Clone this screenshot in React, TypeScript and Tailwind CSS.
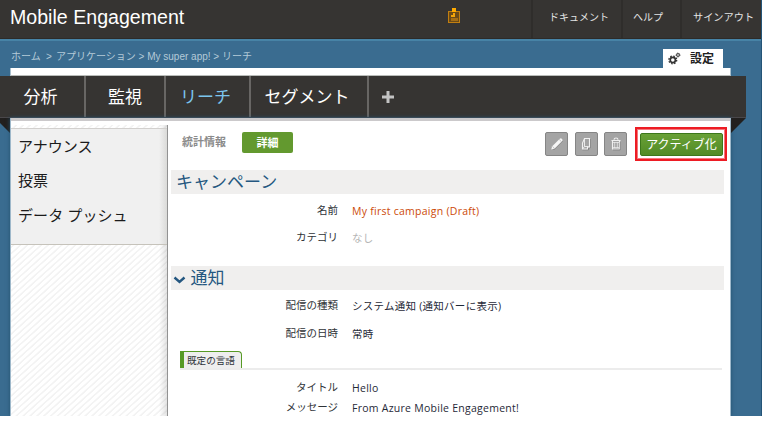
import React from "react";

const hatch =
  "bg-[repeating-linear-gradient(138deg,#ffffff_0px,#ffffff_2.4px,#f3f3f3_3.2px,#f3f3f3_4.2px,#ffffff_4.6px)]";

function IdBadge() {
  return (
    <svg width="14" height="16" viewBox="0 0 14 16" shapeRendering="crispEdges">
      <rect x="1" y="3" width="12" height="12" fill="#c27f10" />
      <rect x="2" y="4" width="10" height="10" fill="#6b4a17" />
      <rect x="5" y="0" width="4" height="4" fill="#ffab00" />
      <rect x="6" y="5" width="2" height="2" fill="#f3a50b" />
      <rect x="4" y="7" width="4" height="2" fill="#f3a50b" />
      <rect x="4" y="10" width="7" height="3" fill="#a56e15" />
    </svg>
  );
}

function Gears() {
  return (
    <svg width="13" height="13" viewBox="0 0 13 13" fill="none" stroke="#333">
      <circle cx="4.8" cy="8" r="2.6" strokeWidth="1.7" />
      <circle cx="4.8" cy="8" r="3.9" strokeWidth="1.3" strokeDasharray="1.6 1.463" />
      <circle cx="10" cy="3" r="1.4" strokeWidth="1" />
      <circle cx="10" cy="3" r="2.100" strokeWidth=".7" strokeDasharray=".8 .85" />
    </svg>
  );
}

function Pencil() {
  return (
    <svg width="14" height="14" viewBox="0 0 14 14">
      <path d="m3.500 13 9-9" stroke="#808080" strokeWidth="1" />
      <path d="M1.200 12.600 2.200 9.200 9.800 1.700q1-.9 2.200.2t.2 2.200L4.700 11.600Z" fill="#f6f6f6" />
      <path d="m2.500 9.400 2 2M9.200 2.500l2.200 2.200" stroke="#a2a2a2" strokeWidth=".6" />
    </svg>
  );
}

function Copy() {
  return (
    <svg width="12" height="14" viewBox="0 0 12 14" fill="none">
      <path d="M10.300 2v8.800H8.500v2h-6" stroke="#777" strokeWidth=".8" />
      <path d="M4.500 1.500h5v8.500H7.500v2h-5V6Z" stroke="#f1f1f1" strokeWidth="1.100" />
      <path d="M4.500 1.500V9.500h4M4.500 9.500l-2 2.500" stroke="#f1f1f1" strokeWidth=".9" />
    </svg>
  );
}

function Trash() {
  return (
    <svg width="12" height="14" viewBox="0 0 12 14" fill="none" stroke="#efefef">
      <path d="M4 2.800q0-1.800 2-1.800t2 1.800M1.500 3.500h9M2.500 4v8h7V4" strokeWidth="1.100" />
      <path d="M4.700 5v6M7.300 5v6M3 5.500h6M3 10.500h6" strokeWidth=".7" />
      <path d="M3 13h7.200V5" stroke="#777" strokeWidth=".6" />
    </svg>
  );
}

function ToolButton({ children }: { children: React.ReactNode }) {
  return (
    <button className="flex h-6 w-[23px] items-center justify-center rounded-[2px] border border-[#858585] bg-[#a4a4a4]">
      {children}
    </button>
  );
}

function Row({
  label,
  value,
  className,
  valueClass = "text-[#1f2937]",
}: {
  label: string;
  value: string;
  className: string;
  valueClass?: string;
}) {
  return (
    <div className={"flex text-[10.5px] whitespace-nowrap " + className}>
      <div className="w-[170px] text-right text-[#2f3337]">{label}</div>
      <div className={"ml-[14px] pt-px tracking-[0.26px] " + valueClass}>{value}</div>
    </div>
  );
}

function NavItem({ label, className }: { label: string; className: string }) {
  return (
    <div className={"flex h-full items-center border-r-2 border-[#686664] whitespace-nowrap " + className}>
      {label}
    </div>
  );
}

export default function App() {
  return (
    <div className="h-[436px] w-[765px] overflow-hidden bg-white font-['Open_Sans','Noto_Sans_CJK_JP',sans-serif]">
      <div className="flex h-[416px] w-[762px] flex-col overflow-hidden border-r border-[#245477] bg-[#3a6c90]">
        <header className="flex h-[39px] w-[762px] shrink-0 border-b border-[#2d2b29] bg-[#363432] font-['Liberation_Sans','Noto_Sans_CJK_JP',sans-serif]">
          <div className="w-[447px] pl-[10px] text-[19.6px] leading-[35px] text-white">Mobile Engagement</div>
          <div className="w-[84px] pt-2">
            <IdBadge />
          </div>
          <nav className="flex text-[10px] leading-[36px] whitespace-nowrap text-[#e4e4e4]">
            <a className="w-[90px] border-l-2 border-[#2f2d2b] pl-4">ドキュメント</a>
            <a className="w-[59px] border-l-2 border-[#2f2d2b] pl-[10px]">ヘルプ</a>
            <a className="w-[81px] border-l-2 border-[#2f2d2b] pl-[11px] text-[10.2px]">サインアウト</a>
          </nav>
        </header>

        <div className="flex h-[29px] shrink-0 justify-between border-t-2 border-[#4783a6] pr-[38px] pl-[11px]">
          <div className="flex pt-2 font-['Liberation_Sans','Noto_Sans_CJK_JP',sans-serif] text-[10px] leading-4 whitespace-pre text-[#b4cad8]">
            <span className="w-[35px]">ホーム</span>
            <span className="w-[10px]">&gt;</span>
            <span>{"アプリケーション > My super app! > リーチ"}</span>
          </div>
          <div className="mt-2 flex h-[19px] w-[60px] bg-white pt-[3px] pl-[5px]">
            <Gears />
            <span className="-mt-px ml-[9px] text-[12px] leading-4 font-bold text-[#222]">設定</span>
          </div>
        </div>

        <div className="ml-[10px] h-2 w-[721px] shrink-0 border-x border-b border-[#a8bfce] border-b-[#b9bcb9] bg-white" />

        <nav className="flex h-[42px] w-[746px] shrink-0 border-b border-[#4a484b] bg-[#363432] text-[17px] text-white">
          <NavItem label="分析" className="w-[86px] pl-[23.5px]" />
          <NavItem label="監視" className="w-[80px] pl-[22px]" />
          <NavItem label="リーチ" className="w-[85px] pl-[14px] text-[#7cc5ee]" />
          <NavItem label="セグメント" className="w-[118px] pl-[13.5px]" />
          <div className="flex items-center pl-[13px]">
            <svg width="12" height="12" viewBox="0 0 12 12">
              <path d="M4.500 0h3v4.500H12v3H7.500V12h-3V7.500H0v-3h4.500Z" fill="#c3c3c3" />
            </svg>
          </div>
        </nav>

        <main className="flex h-[298px] shrink-0">
          <svg width="10" height="15" viewBox="0 0 10 15" className="shrink-0">
            <path d="M0 0h10v15L0 5Z" fill="#22201f" />
          </svg>
          <section className="w-[721px] shrink-0 border-x border-[#9eb8ca] bg-white shadow-[0_0_4px_#24516f]">
            <div className="h-[3px] bg-[#cbc9cb]" />
            <div className="flex">
              <aside className={"mt-1 h-[291px] w-[157px] border-r border-[#929292] bg-white " + hatch}>
                <div className="h-full bg-[linear-gradient(to_left,#0000001c,#00000000_8px)]">
                  <div className="h-[3px]" />
                  <div className="flex h-[117px] flex-col border-y border-t-[#d2d0ce] border-b-[#c6c3bb] bg-[linear-gradient(to_left,#dadad8,#f0f0f0_8px)] pl-[7px] text-[15px] leading-[34.500px] whitespace-nowrap text-[#1b1b1b]">
                    <a className="h-[34px]">アナウンス</a>
                    <a className="h-[34.500px]">投票</a>
                    <a className="tracking-[0.1px]">データ プッシュ</a>
                  </div>
                </div>
              </aside>

              <div className="w-[562px]">
                <div className="flex h-[49px] pt-[6px] pr-[3px] pl-[14px]">
                  <span className="mt-[7px] text-[11px] leading-4 font-bold text-[#8b8b8b]">統計情報</span>
                  <button className="mt-[5px] ml-4 h-[21px] w-[51px] rounded-[2px] bg-[#63992f] text-[11px] leading-5 font-bold text-white">
                    詳細
                  </button>
                  <div className="mt-[5px] ml-auto flex gap-[6.500px]">
                    <ToolButton><Pencil /></ToolButton>
                    <ToolButton><Copy /></ToolButton>
                    <ToolButton><Trash /></ToolButton>
                  </div>
                  <div className="ml-2 h-[34px] w-[92px] border-2 border-[#ed1c24] px-[3px] py-1 inset-ring inset-ring-[#f4777c]">
                    <button className="block h-[23px] w-[83px] rounded-[2px] border border-[#3c771b] bg-linear-to-b from-[#69a136] to-[#528b26] text-[12px] leading-[20px] whitespace-nowrap text-white">
                      アクティブ化
                    </button>
                  </div>
                </div>

                <h2 className="ml-[3px] h-6 w-[553px] bg-[#f0efee] pl-[5px] text-[17px] leading-[24px] text-[#245780]">キャンペーン</h2>
                <Row label="名前" value="My first campaign (Draft)" className="h-[27px] pt-2 leading-4" valueClass="text-[#cc4a08]" />
                <Row label="カテゴリ" value="なし" className="h-[45px] pt-2 leading-4" valueClass="text-[#b5b5b5]" />

                <h2 className="ml-[3px] flex h-6 w-[553px] items-center bg-[#f0efee] pl-[2px] text-[17px] leading-[23px] text-[#245780]">
                  <svg width="13" height="8" viewBox="0 0 13 8" className="mt-[3px] mr-[4.500px]">
                    <path d="m1.500 1.500 5 4.500 5-4.500" fill="none" stroke="#245780" strokeWidth="2.400" />
                  </svg>
                  <span className="-mt-[2px]">通知</span>
                </h2>
                <Row label="配信の種類" value="システム通知 (通知バーに表示)" className="h-7 pt-[7px] leading-4" />
                <Row label="配信の日時" value="常時" className="h-[33px] pt-[7px] leading-4" />

                <div className="ml-3 flex h-[19px] w-[542px] border-b-2 border-[#ececec]">
                  <div className="h-[17px] w-[62px] rounded-tr-[4px] border-t border-r border-l-4 border-[#579a26] bg-[#eeeeee] pl-[3px] text-[9.600px] leading-[17px] whitespace-nowrap text-[#30343a]">
                    既定の言語
                  </div>
                </div>
                <Row label="タイトル" value="Hello" className="h-[21px] pt-[9px] leading-4" />
                <Row label="メッセージ" value="From Azure Mobile Engagement!" className="h-[24px] pt-2 leading-4" />
              </div>
            </div>
          </section>
          <svg width="15" height="15" viewBox="0 0 15 15" className="shrink-0">
            <path d="M0 0h15L0 15Z" fill="#22201f" />
          </svg>
        </main>
      </div>
    </div>
  );
}
